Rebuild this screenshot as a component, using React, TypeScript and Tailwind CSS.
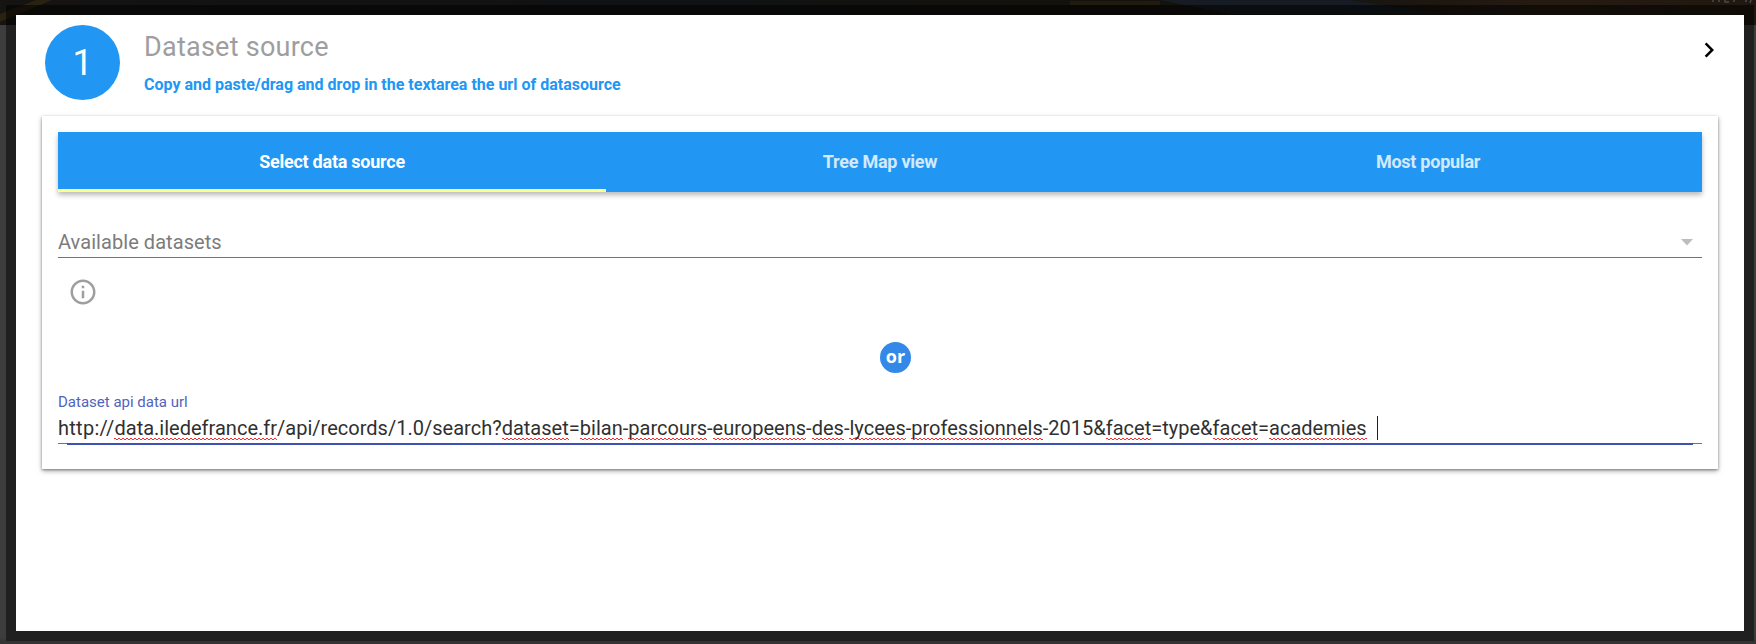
import type { ReactNode } from "react";

const tabs = ["Select data source", "Tree Map view", "Most popular"];

function Misspelt({ children }: { children: ReactNode }) {
  return (
    <span className="bg-[image:linear-gradient(90deg,#ff2a2a_50%,transparent_50%),linear-gradient(90deg,transparent_50%,#ff2a2a_50%)] bg-[length:4px_1px,4px_1px] bg-[position:0_calc(100%-1px),0_100%] bg-repeat-x">
      {children}
    </span>
  );
}

// Dimmed photo banner showing above the dialog
function Banner() {
  return (
    <svg className="absolute top-0 left-0 h-[25px] w-[1756px]" viewBox="0 0 1756 25" preserveAspectRatio="none">
      <defs>
        <linearGradient id="sky">
          <stop offset="0" stopColor="#151411" />
          <stop offset="0.05" stopColor="#141313" />
          <stop offset="0.4" stopColor="#111214" />
          <stop offset="0.6" stopColor="#14120d" />
          <stop offset="0.75" stopColor="#15130f" />
          <stop offset="0.88" stopColor="#261b12" />
          <stop offset="1" stopColor="#201810" />
        </linearGradient>
      </defs>
      <rect width="1756" height="25" fill="url(#sky)" />
      <path d="M0 14L36 0h16L0 22z" fill="#2a2211" />
      <path d="M1160 0h190l90 14h-210z" fill="#171c24" />
      <path d="M1070 1h90v4h-90z" fill="#201b0b" />
      <path d="M1713 0v2M1719 0v2M1725 0v2h4M1734 0v2M1746 0v2M1751 0l-1 3" stroke="#4a4a4e" strokeWidth="1.5" fill="none" />
    </svg>
  );
}

export default function App() {
  return (
    <div className="relative h-[644px] w-[1756px] overflow-hidden bg-linear-to-b from-[#3d3d3d] from-[638px] to-[#343434] to-[641px] pt-[5px] pr-[2px] pb-[3px] pl-[6px] font-['Roboto',sans-serif]">
      <Banner />
      <div className="relative h-[636px] bg-linear-to-b from-black/55 from-[20px] to-[#202020] to-[20px] p-[10px]">
        <main className="h-[616px] bg-white px-[26px] pt-[10px]">
          <header className="flex h-[91px] items-start pl-[3px]">
            <div className="flex size-[75px] items-center justify-center rounded-full bg-[#2196f3] text-[36px] text-white">1</div>
            <div className="ml-[24px] flex-1">
              <h1 className="pt-[4px] text-[27px] leading-[36px] tracking-[0.25px] text-[#9e9e9e]">Dataset source</h1>
              <p className="mt-[10px] text-[16px] leading-[20px] font-bold text-[#2196f3]">
                Copy and paste/drag and drop in the textarea the url of datasource
              </p>
            </div>
            <svg className="mt-[10px] -mr-[6px] size-[30px]" viewBox="0 0 24 24" fill="#000">
              <path d="M10 6L8.59 7.41 13.17 12l-4.58 4.59L10 18l6-6z" />
            </svg>
          </header>

          <section className="h-[353px] bg-white px-[16px] pt-[16px] shadow-[0_2px_5px_rgba(0,0,0,0.35),0_1px_2px_rgba(0,0,0,0.3)]">
            <nav className="grid h-[60px] grid-cols-3 bg-[#2196f3] shadow-[0_3px_5px_rgba(0,0,0,0.28)]">
              {tabs.map((tab, i) => (
                <div
                  key={tab}
                  className={
                    i === 0
                      ? "flex items-center justify-center border-b-[3px] border-[#ffff8d] pt-px text-[18px] font-bold tracking-[-0.25px] text-white"
                      : "flex items-center justify-center pb-[2px] text-[18px] font-bold tracking-[-0.25px] text-white/80"
                  }
                >
                  {tab}
                </div>
              ))}
            </nav>

            <div className="mt-[34px] flex h-[32px] items-center justify-between border-b border-[#737373] pr-[9px]">
              <span className="text-[20px] tracking-[0.06px] text-[#7c7c7c]">Available datasets</span>
              <svg className="mt-[2px] h-[7px] w-[12px]" viewBox="0 0 12 7" fill="#bdbdbd">
                <path d="M0 0h12L6 6.5z" />
              </svg>
            </div>

            <svg className="mt-[19px] ml-[10px] size-[30px]" viewBox="0 0 24 24" fill="#9e9e9e">
              <path d="M11 17h2v-6h-2v6zm1-15C6.48 2 2 6.48 2 12s4.48 10 10 10 10-4.48 10-10S17.52 2 12 2zm0 18c-4.41 0-8-3.59-8-8s3.59-8 8-8 8 3.59 8 8-3.59 8-8 8zM11 9h2V7h-2v2z" />
            </svg>

            <div className="mt-[35px] flex justify-center pl-[31px]">
              <div className="flex size-[31px] items-center justify-center rounded-full bg-[#3388e8] pb-[2px] font-['Open_Sans',sans-serif] text-[18px] font-bold text-white">
                or
              </div>
            </div>

            <label className="mt-[19px] block text-[15px] leading-[20px] text-[#5262bd]">Dataset api data url</label>
            <div className="mt-[4px] flex h-[27px] items-start text-[20px] leading-[24px] tracking-[0.01px] whitespace-pre text-[#303030]">
              <span>
                <span className="tracking-[0.28px]">http://</span>
                <Misspelt>data.iledefrance.fr</Misspelt>/api/records/1.0/search?<Misspelt>dataset</Misspelt>=
                <Misspelt>bilan</Misspelt>-<Misspelt>parcours</Misspelt>-<Misspelt>europeens</Misspelt>-
                <Misspelt>des</Misspelt>-<Misspelt>lycees</Misspelt>-<Misspelt>professionnels</Misspelt>
                -2015&amp;<Misspelt>facet</Misspelt>=type&amp;<Misspelt>facet</Misspelt>=<Misspelt>academies</Misspelt>
              </span>
              <span className="ml-[10px] h-[24px] w-px bg-[#212121]" />
            </div>
            <div className="h-[2px] border-t border-[#737373]">
              <div className="mx-[9px] -mt-px h-[2px] bg-[#3f51b5]" />
            </div>
          </section>
        </main>
      </div>
    </div>
  );
}
